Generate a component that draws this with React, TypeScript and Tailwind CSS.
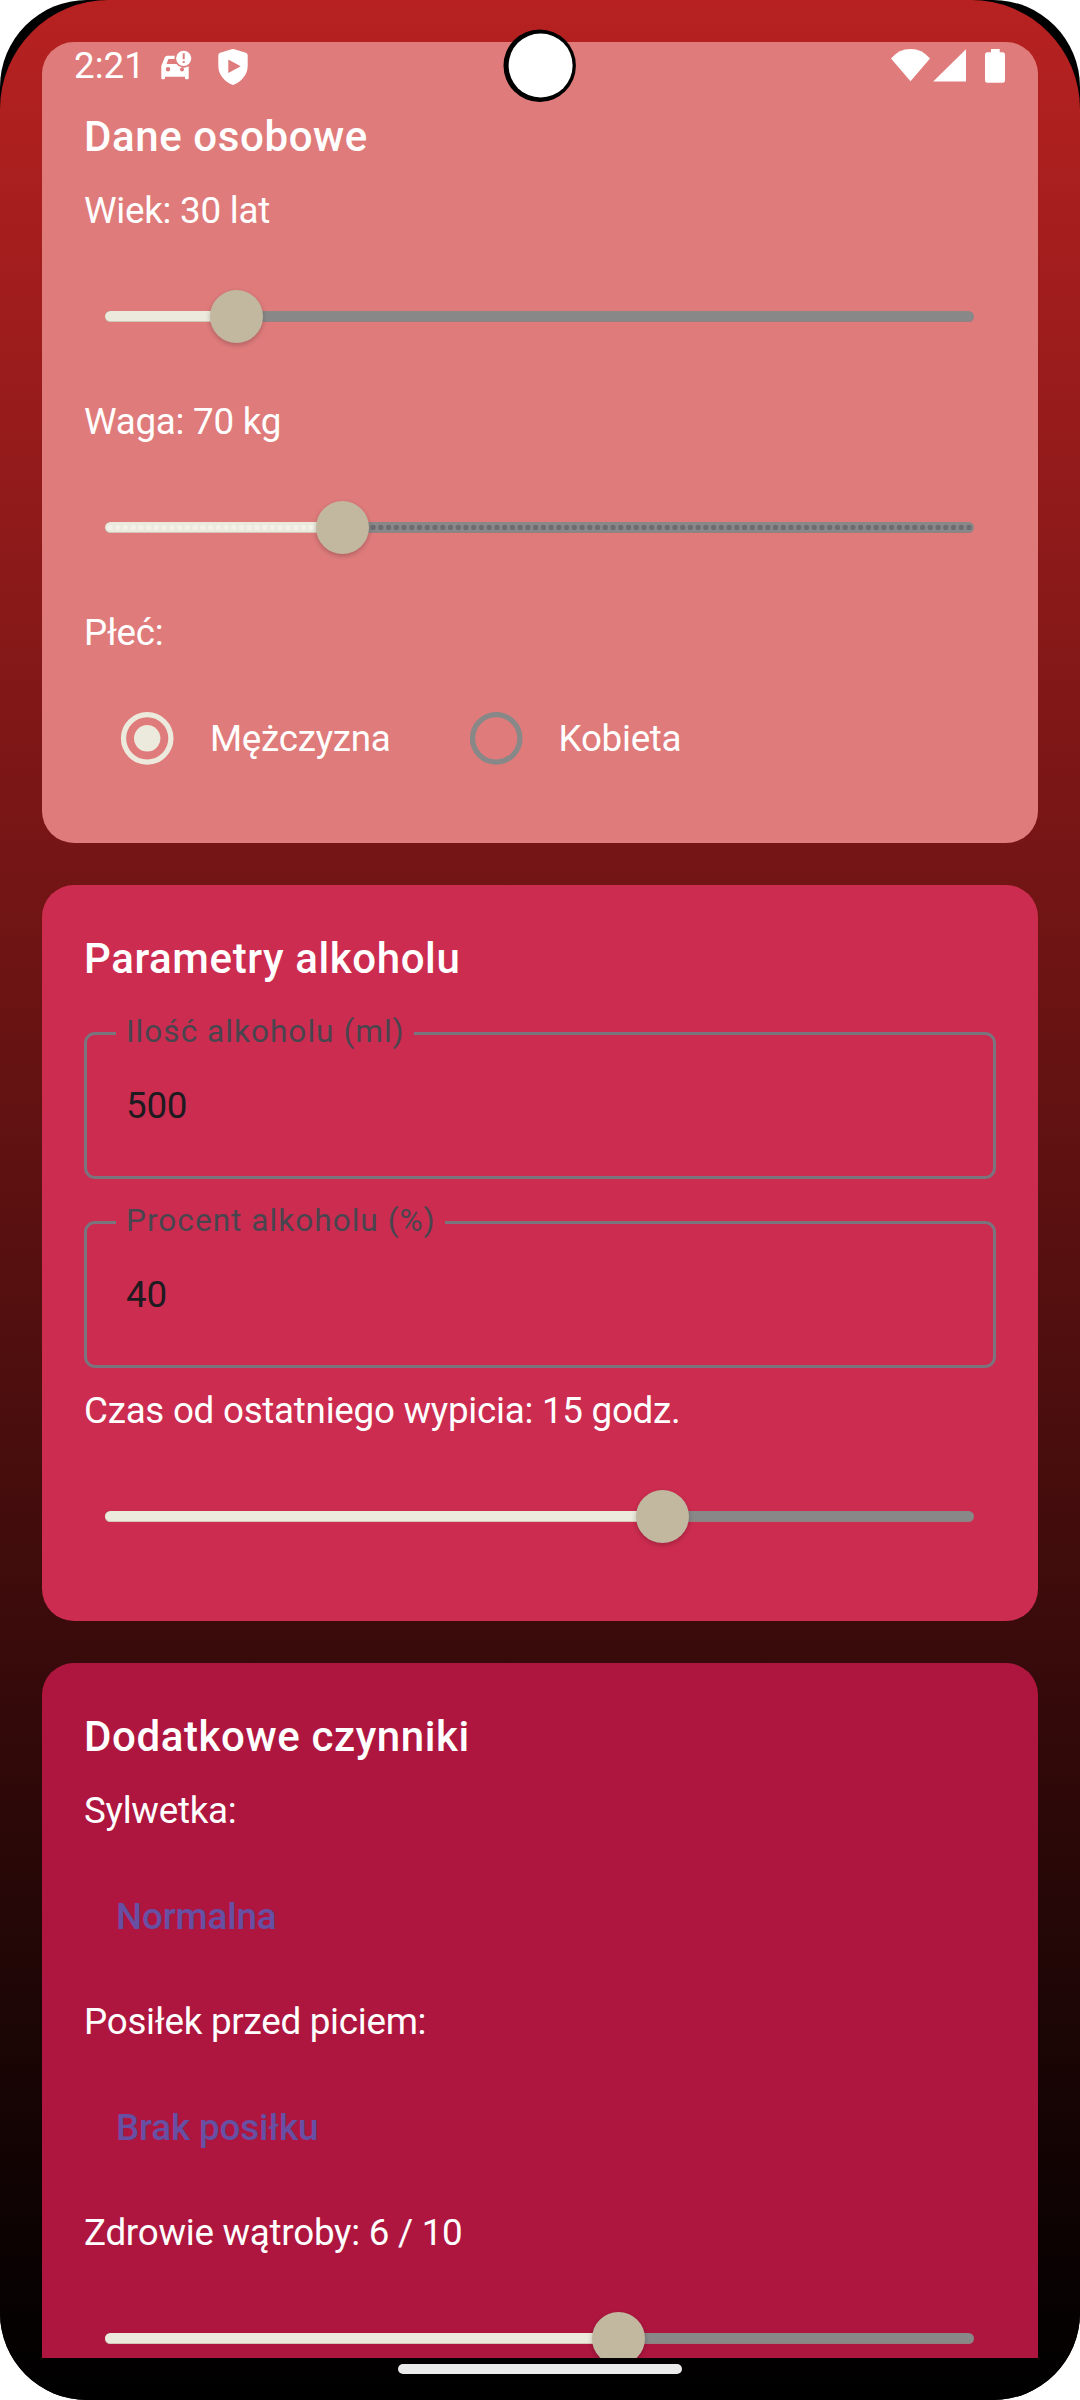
import type { ReactNode } from "react";

const TRACK_START = 5;
const TRACK_SPAN = 859;

function Title({ children }: { children: ReactNode }) {
  return <h2 className="text-[42px] leading-[63px] font-medium tracking-[0.6px]">{children}</h2>;
}

function Label({ children }: { children: ReactNode }) {
  return <p className="h-[63px] text-[36.75px] leading-[63px] tracking-[-0.26px] whitespace-nowrap">{children}</p>;
}

function Slider({ value, ticks }: { value: number; ticks?: boolean }) {
  const center = TRACK_START + value * TRACK_SPAN;
  const step = TRACK_SPAN / 111;
  const activeCount = Math.floor(value * 111 + 0.01);
  const split = TRACK_START + activeCount * step;
  return (
    <div className="relative h-[126px] shrink-0 px-[21px]">
      <div className="relative top-[58px] h-[11px] w-[869px] rounded-full bg-[#888888] shadow-[inset_0_-1px_0_rgba(180,100,100,0.25)]">
        <div
          className="h-full rounded-full bg-[#ECEADC] shadow-[inset_0_-1px_0_rgba(160,120,100,0.3)]"
          style={{ width: center }}
        />
        {ticks && (
          <svg className="absolute inset-0" width="870" height="11" viewBox="0 0 870 11" fill="none" strokeLinecap="round" strokeWidth="5.25">
            <line x1={split} y1="5.4" x2={TRACK_START + TRACK_SPAN + 0.1} y2="5.4" stroke="#6D6D71" strokeDasharray={`0 ${step}`} />
            <line x1={TRACK_START} y1="5.4" x2={split} y2="5.4" stroke="#F3F2EA" strokeDasharray={`0 ${step}`} />
          </svg>
        )}
        <div
          className="absolute -top-[21px] size-[53px] rounded-full bg-[#C2B8A0] shadow-[0_2px_5px_rgba(0,0,0,0.22)]"
          style={{ left: center - 26.5 }}
        />
      </div>
    </div>
  );
}

function Radio({ label, checked }: { label: string; checked?: boolean }) {
  return (
    <div className="flex h-[126px] items-center">
      <svg className="size-[126px]" viewBox="0 0 126 126" fill="none">
        <circle cx="63.2" cy="63.3" r="23.7" strokeWidth="5.25" stroke={checked ? "#ECEADC" : "#888888"} />
        {checked && <circle cx="63.2" cy="63.3" r="13.2" fill="#ECEADC" />}
      </svg>
      <Label>{label}</Label>
    </div>
  );
}

function Field({ label, value }: { label: string; value: string }) {
  return (
    <div className="relative mt-[42px] flex h-[147px] items-center rounded-[11px] border-[3px] border-[#79747E] px-[39px] text-[36.75px] tracking-[-0.26px] text-[#1D1B20]">
      <span className="absolute -top-[24px] left-[29px] bg-[#CC2C50] pr-[9px] pl-[10px] text-[31.5px] leading-[42px] tracking-[1.05px] whitespace-nowrap text-[#49454F]">
        {label}
      </span>
      <span>{value}</span>
    </div>
  );
}

function Choice({ children }: { children: ReactNode }) {
  return (
    <button className="flex h-[126px] shrink-0 items-center px-[32px] pt-[2px] text-[36.75px] font-medium tracking-[-0.12px] text-[#6750A4]">
      {children}
    </button>
  );
}

function StatusBar() {
  return (
    <div className="absolute inset-x-0 top-0 flex h-[132px] items-center px-[74px]">
      <span className="text-[36.75px] leading-[42px]">2:21</span>
      <svg className="ml-[15px] h-[38px] w-[34px]" viewBox="0 0 34 38" fill="white">
        <path
          fillRule="evenodd"
          d="M7.300 8.700H14.800A9.300 9.300 0 0 0 14.500 12H8.400L6.600 17H16.400A9.300 9.300 0 0 0 28.700 19.200V31.200Q28.700 32.300 27.500 32.300H26.200Q25 32.300 25 31.200V29.700H5V31.200Q5 32.300 3.800 32.300H2.500Q1.300 32.300 1.300 31.200V19L4.800 10.300Q5.400 8.700 7.300 8.700ZM8 20A2.200 2.200 0 1 0 8 24.400A2.200 2.200 0 1 0 8 20ZM22 20.400A2 2 0 1 0 22 24.400A2 2 0 1 0 22 20.400Z"
        />
        <path fillRule="evenodd" d="M23.700 3.700A7.600 7.600 0 1 1 23.700 18.900A7.600 7.600 0 1 1 23.700 3.700ZM22.700 6.200V12.300H24.700V6.200ZM22.700 14V16.100H24.700V14Z" />
      </svg>
      <svg className="ml-[23px] h-[38px] w-[34px]" viewBox="0 0 34 38" fill="white">
        <path fillRule="evenodd" d="M14.700 2.300Q16 1.800 17.300 2.300L28.900 5.700Q30.700 6.300 30.700 8.200V19C30.700 27.500 24.300 35 16 38C7.700 35 1.300 27.500 1.300 19V8.200Q1.300 6.300 3.100 5.700ZM11.300 12.600V25.900L23.700 19.200Z" />
      </svg>
      <svg className="ml-auto h-[38px] w-[116px]" viewBox="0 0 116 38" fill="white">
        <path d="M1 11.500Q9 2.100 20.500 2.100Q32 2.100 40 11.500L20.500 34.300Z" />
        <path d="M43.200 34.600H76V2.300Z" />
        <path d="M101 2.100H109.700V5.200H112.500Q115 5.200 115 7.700V33.300Q115 35.800 112.500 35.800H97.500Q95 35.800 95 33.300V7.700Q95 5.200 97.500 5.200H101Z" />
      </svg>
    </div>
  );
}

export default function App() {
  return (
    <div className="h-[2400px] w-[1080px] overflow-hidden bg-white font-[Roboto,sans-serif] text-white antialiased">
      <div className="h-full overflow-hidden rounded-[87px] bg-black">
        <div className="relative flex h-full flex-col overflow-hidden rounded-t-[109px] bg-[linear-gradient(to_bottom,#B72121,#000000)] px-[42px] pt-[42px] pb-[42px]">
          <main className="flex min-h-0 flex-1 flex-col gap-[42px] overflow-hidden">
            <section className="flex h-[801px] shrink-0 flex-col gap-[11px] rounded-[32px] bg-[#DF7B7B] px-[42px] pt-[63px]">
              <Title>Dane osobowe</Title>
              <Label>Wiek: 30 lat</Label>
              <Slider value={0.1473} />
              <Label>Waga: 70 kg</Label>
              <Slider value={30 / 111} ticks />
              <Label>Płeć:</Label>
              <div className="flex gap-[42px]">
                <Radio label="Mężczyzna" checked />
                <Radio label="Kobieta" />
              </div>
            </section>

            <section className="flex h-[736px] shrink-0 flex-col rounded-[32px] bg-[#CC2C50] px-[42px] pt-[42px]">
              <Title>Parametry alkoholu</Title>
              <Field label="Ilość alkoholu (ml)" value="500" />
              <Field label="Procent alkoholu (%)" value="40" />
              <div className="mt-[11px] flex flex-col gap-[11px]">
                <Label>Czas od ostatniego wypicia: 15 godz.</Label>
                <Slider value={0.6427} />
              </div>
            </section>

            <section className="flex shrink-0 flex-col gap-[11px] rounded-[32px] bg-[#AE163F] p-[42px]">
              <Title>Dodatkowe czynniki</Title>
              <Label>Sylwetka:</Label>
              <Choice>Normalna</Choice>
              <Label>Posiłek przed piciem:</Label>
              <Choice>Brak posiłku</Choice>
              <Label>Zdrowie wątroby: 6 / 10</Label>
              <Slider value={0.5922} />
            </section>
          </main>

          <StatusBar />
          <svg className="absolute top-[29px] left-[503px] size-[74px]" viewBox="0 0 74 74">
            <circle cx="36.700" cy="36.700" r="36.200" fill="black" />
            <circle cx="37.600" cy="36.500" r="32" fill="white" />
          </svg>
          <div className="absolute bottom-[26px] left-[398px] h-[10px] w-[284px] rounded-full bg-[#EBEBEB]" />
        </div>
      </div>
    </div>
  );
}
